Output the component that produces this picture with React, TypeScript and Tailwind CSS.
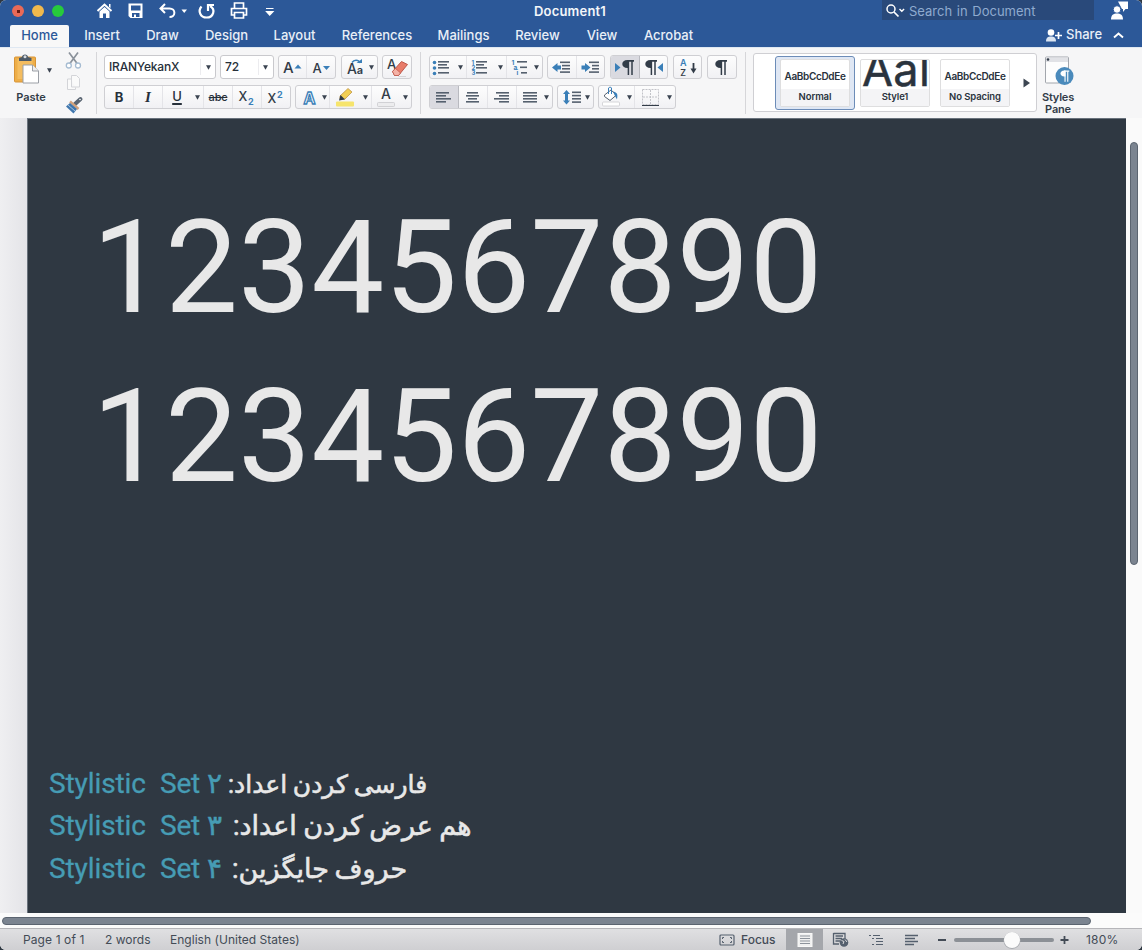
import React from "react";

type SvgProps = { w: number; h?: number; children: React.ReactNode };

function Ico({ w, h = 23, children }: SvgProps) {
  return (
    <svg width={w} height={h} viewBox={`0 0 ${w} ${h}`} fill="none" className="block shrink-0">
      {children}
    </svg>
  );
}

function Arrow({ color = "#3a4350" }: { color?: string }) {
  return (
    <svg width="5" height="5" viewBox="0 0 5 5" className="block shrink-0">
      <path d="M0 .3H5L2.500 4.800Z" fill={color} />
    </svg>
  );
}

function Group({ className, children }: { className: string; children: React.ReactNode }) {
  return (
    <div
      className={`flex h-6 shrink-0 items-stretch overflow-hidden rounded-[3px] border border-[#cfcfd3] bg-gradient-to-b from-[#fdfdfd] to-[#f1f1f4] ${className}`}
    >
      {children}
    </div>
  );
}

function Cell({ className, children }: { className: string; children: React.ReactNode }) {
  return <div className={`flex shrink-0 items-center justify-center ${className}`}>{children}</div>;
}

const ink = "#323c48";
const blue = "#3a7fb8";
const line = "#55606e";

function Lines({ rows }: { rows: [number, number, number][] }) {
  return (
    <>
      {rows.map(([x, y, len]) => (
        <rect key={`${x}-${y}`} x={x} y={y} width={len} height="1.6" fill={line} />
      ))}
    </>
  );
}

function Pilcrow({ x, color = ink }: { x: number; color?: string }) {
  return (
    <g transform={`translate(${x} 4)`}>
      <path d="M5 0H12V1.700H5Z" fill={color} />
      <path d="M5.500 0C-1.500 0 -1.500 8 5.500 8H7V0Z" fill={color} />
      <path d="M6.400 1V15M10 1V15" stroke={color} strokeWidth="1.500" />
    </g>
  );
}

const svgFont = { fontFamily: "Inter, sans-serif" };

function TitleBar() {
  return (
    <div className="flex h-[25px] items-start">
      <div className="flex h-[22px] w-[533px] items-center">
        <div className="ml-3 flex gap-2">
          <div className="flex h-3 w-3 items-center justify-center rounded-full bg-[#e96a57]">
            <div className="h-[3px] w-[3px] bg-[#6b1b12]" />
          </div>
          <div className="h-3 w-3 rounded-full bg-[#f0b94d]" />
          <div className="h-3 w-3 rounded-full bg-[#27cb3c]" />
        </div>
        <div className="ml-[30px] flex">
          <Ico w={200} h={22}>
            <g transform="translate(-94 0)">
              <path d="M97.500 11L104.500 4.500L111.500 11" stroke="#fff" strokeWidth="2" />
              <path d="M99.500 11.500L104.500 7L109.500 11.500V18H106V13.500H103V18H99.500Z" fill="#fff" />
              <path d="M109 4H110.500V8L109 7Z" fill="#fff" />
              <path d="M128.500 3.500H142.500V18H130.500L128.500 16Z" fill="#fff" />
              <path d="M131 5.500H140.500V10.500H131ZM132 13H139.500V17H136V14.500H134V17H132Z" fill="#2c5898" />
              <path d="M165 4L160.500 8.500L165 13M161 8.500H169.500C176 8.500 176 17 169.500 17" stroke="#fff" strokeWidth="2" />
              <path d="M181.500 9.500H187L184.200 13Z" fill="#fff" />
              <path d="M201.500 6.500C197.500 11 200.500 17.500 206.500 17.500C213.500 17.500 216 9.500 210 6M208 11V5H214" stroke="#fff" strokeWidth="2.200" />
              <path d="M234.500 8V3H243.500V8M234 15H231.500V8.500H246.500V15H244M234.500 12.500H243.500V18H234.500Z" stroke="#fff" strokeWidth="1.700" />
              <path d="M266 8.500H273.500M266.500 11.500H273L269.700 15Z" stroke="#fff" strokeWidth="1.200" fill="#fff" />
            </g>
          </Ico>
        </div>
      </div>
      <div className="flex h-[23px] w-[74px] items-center justify-center whitespace-nowrap text-[13px] font-semibold tracking-[0.200px] text-[#f3f6fa]">
        Document1
      </div>
      <div className="ml-[275px] flex h-5 w-[212px] items-center bg-[#29497a]">
        <Ico w={24} h={20}>
          <circle cx="9" cy="9" r="4" stroke="#fff" strokeWidth="1.500" />
          <path d="M12 12L16.500 16.500" stroke="#fff" strokeWidth="1.700" />
          <path d="M17.500 9L19.800 11.300L22.100 9" stroke="#fff" strokeWidth="1.400" />
        </Ico>
        <span className="ml-[3px] mt-px whitespace-nowrap text-[13px] leading-4 tracking-[-0.450px] text-[#8fabcf] [word-spacing:1px]">
          <span className="tracking-normal">Search in Document</span>
        </span>
      </div>
      <div className="ml-[16px]">
        <Ico w={20} h={22}>
          <path d="M8 1.500H18V9H15.500L13 12V9H12Z" fill="#fff" />
          <circle cx="7" cy="9.500" r="3.800" fill="#fff" stroke="#2c5898" />
          <path d="M1 19.500C1 15 3.500 13.500 7 13.500S13 15 13 19.500Z" fill="#fff" />
        </Ico>
      </div>
    </div>
  );
}

function Tabs() {
  const tab = "flex h-[22px] shrink-0 items-center justify-center text-[13px] font-medium";
  return (
    <div className="flex h-[22px] items-center pl-[10px] text-[#e9eff7]">
      <div className={`${tab} w-[59px] rounded-t-[2px] bg-[#f8f8f8] text-[#2c5898]`}>Home</div>
      <div className={`${tab} w-[66px]`}>Insert</div>
      <div className={`${tab} w-[55px]`}>Draw</div>
      <div className={`${tab} w-[73px]`}>Design</div>
      <div className={`${tab} w-[63px]`}>Layout</div>
      <div className={`${tab} w-[102px]`}>References</div>
      <div className={`${tab} w-[71px]`}>Mailings</div>
      <div className={`${tab} w-[77px]`}>Review</div>
      <div className={`${tab} w-[52px]`}>View</div>
      <div className={`${tab} w-[81px]`}>Acrobat</div>
      <div className="ml-auto flex items-center pr-[18px]">
        <Ico w={18} h={16}>
          <circle cx="6" cy="4.500" r="3.300" fill="#fff" />
          <path d="M1 13.500C1 9.500 3 8.500 6 8.500S11 9.500 11 13.500Z" fill="#dbe5f1" />
          <path d="M10 7.500H17M13.500 4V11" stroke="#fff" strokeWidth="1.700" />
        </Ico>
        <span className="mt-[-3px] ml-[3px] w-[36px] text-[13px] font-medium">Share</span>
        <span className="ml-[11px]">
          <Ico w={11} h={10}>
            <path d="M1 6.500L5.500 2.500L10 6.500" stroke="#fff" strokeWidth="1.900" />
          </Ico>
        </span>
      </div>
    </div>
  );
}

function Clipboard() {
  return (
    <div className="flex w-[96px] shrink-0">
      <div className="flex w-[60px] flex-col">
        <div className="flex h-[37px]">
          <span className="ml-3 mt-[5px]">
            <Ico w={30} h={32}>
              <rect x="2.500" y="4" width="21" height="25" rx="1" fill="#eeae48" stroke="#d89436" />
              <rect x="5.500" y="6" width="15" height="20" fill="#f4bd60" />
              <path d="M7 8V5L10 4C10 .5 16 .5 16 4L19.500 5V8Z" fill="#4d5a68" />
              <circle cx="13" cy="3.800" r="1.500" fill="#d6dbe0" />
              <path d="M11 12H20.500L26.500 18V30H11Z" fill="#fff" stroke="#9b9fa6" />
              <path d="M20.500 12V18H26.500" fill="#eee" stroke="#9b9fa6" />
            </Ico>
          </span>
          <span className="ml-[5px] mt-[20px]"><Arrow /></span>
        </div>
        <span className="mt-[4px] w-[62px] text-center text-[11px] font-semibold leading-4 text-[#323c48]">Paste</span>
      </div>
      <div className="flex flex-col">
        <Ico w={28} h={70}>
          <g transform="translate(0 -1)">
            <path d="M9 5.500L17.500 17M18 5.500L9.500 17" stroke="#8b929b" strokeWidth="1.700" />
            <circle cx="8.800" cy="18.500" r="2.500" fill="#fff" stroke="#a6bcd2" strokeWidth="1.300" />
            <circle cx="18" cy="18.500" r="2.500" fill="#fff" stroke="#a6bcd2" strokeWidth="1.300" />
            <path d="M11.500 28.500H16.500L19.500 31.500V40H11.500ZM11 32H7.500V42.500H15.500V40.500" stroke="#d3d4d8" fill="#fafafa" />
            <path d="M14.500 57.500L20.500 52" stroke="#5a6572" strokeWidth="4" strokeLinecap="round" />
            <path d="M10 54.500L18.500 62" stroke="#d3a27c" strokeWidth="2.500" />
            <path d="M6 59.500L10 56L17 62L13.500 66.500Z" fill="#3f76ad" />
            <path d="M8 58L15 64" stroke="#a9c4df" />
            <circle cx="20" cy="52.500" r=".8" fill="#fff" />
          </g>
        </Ico>
      </div>
    </div>
  );
}

function RowOne() {
  return (
    <div className="flex h-6">
      <div className="flex h-6 w-[112px] items-center rounded-[3px] border border-[#c9c9cd] bg-white">
        <span className="w-[95px] pl-[4px] text-[12px] font-medium tracking-[-0.200px] text-[#27303a]">IRANYekanX</span>
        <span className="mr-[5px] h-4 w-px bg-[#ececef]" />
        <Arrow />
      </div>
      <div className="ml-1 flex h-6 w-[54px] items-center rounded-[3px] border border-[#c9c9cd] bg-white">
        <span className="w-[37px] pl-[4px] text-[12px] font-medium text-[#27303a]">72</span>
        <span className="mr-[4px] h-4 w-px bg-[#ececef]" />
        <Arrow />
      </div>
      <Group className="ml-1 w-[58px]">
        <Cell className="w-7 border-r border-[#e4e4e8]">
          <Ico w={28}>
            <text x="4" y="16.500" fontSize="15" fontWeight="500" fill={ink} style={svgFont}>A</text>
            <path d="M15.500 12.500H22.500L19 8.500Z" fill={blue} />
          </Ico>
        </Cell>
        <Cell className="w-7">
          <Ico w={28}>
            <text x="5.500" y="16.500" fontSize="13" fontWeight="500" fill={ink} style={svgFont}>A</text>
            <path d="M16 10H23L19.500 14Z" fill={blue} />
          </Ico>
        </Cell>
      </Group>
      <Group className="ml-[5px] w-[37px]">
        <Cell className="w-[26px]">
          <Ico w={26}>
            <text x="5" y="18" fontSize="14" fontWeight="500" fill={ink} style={svgFont}>A</text>
            <text x="14.800" y="18" fontSize="11" fontWeight="600" fill={ink} style={svgFont}>a</text>
            <path d="M10 6.500C12 3.500 16.500 3.500 18 7" stroke={blue} strokeWidth="1.500" />
            <path d="M14.500 7H20V3Z" fill={blue} />
          </Ico>
        </Cell>
        <Cell className="w-[7px]"><Arrow /></Cell>
      </Group>
      <Group className="ml-1 w-[30px]">
        <Cell className="w-7">
          <Ico w={28}>
            <text x="4" y="13" fontSize="13" fontWeight="500" fill={ink} style={svgFont}>A</text>
            <path d="M9.500 15.500L18.500 5.500L24.500 8.500L15.500 19.500H11.500Z" fill="#e87c6a" stroke="#b74f42" strokeWidth=".9" />
            <path d="M9.500 15.500L12.500 12.500L17.500 17L15.500 19.500H11.500Z" fill="#f4b1a5" stroke="#b74f42" strokeWidth=".6" />
            <path d="M15.500 20.500H23" stroke="#d5d5d8" />
          </Ico>
        </Cell>
      </Group>
      <Group className="ml-[17px] w-[114px]">
        <Cell className="w-[25px]">
          <Ico w={25}>
            <circle cx="4.500" cy="6.500" r="1.800" fill={blue} />
            <circle cx="4.500" cy="12" r="1.800" fill={blue} />
            <circle cx="4.500" cy="17.500" r="1.800" fill={blue} />
            <Lines rows={[[8, 5, 11], [8, 8, 9], [8, 11, 11], [8, 16, 11]]} />
          </Ico>
        </Cell>
        <Cell className="w-[11px]"><Arrow /></Cell>
        <Cell className="w-[28px] border-l border-[#e4e4e8]">
          <Ico w={27}>
            <g fill={blue} fontSize="6" fontWeight="700" style={svgFont}>
              <text x="4.500" y="8.500">1</text><text x="4.500" y="13.500">2</text><text x="4.500" y="18.500">3</text>
            </g>
            <Lines rows={[[9, 5, 11], [9, 8, 8], [9, 11, 11], [9, 16, 11]]} />
          </Ico>
        </Cell>
        <Cell className="w-[12px]"><Arrow /></Cell>
        <Cell className="w-[26px] border-l border-[#e4e4e8]">
          <Ico w={25}>
            <g fill={blue} fontSize="6.500" fontWeight="700" style={svgFont}>
              <text x="4.500" y="8.500">1</text><text x="6.500" y="14">a</text><text x="9.500" y="19">i</text>
            </g>
            <Lines rows={[[10, 5, 10], [13, 10.500, 7], [14, 16, 6]]} />
          </Ico>
        </Cell>
        <Cell className="w-[8px]"><Arrow /></Cell>
      </Group>
      <Group className="ml-1 w-[58px]">
        <Cell className="w-[29px] border-r border-[#e4e4e8]">
          <Ico w={28}>
            <path d="M4 11.500L9.500 7V9.500H13V13.500H9.500V16Z" fill={blue} />
            <Lines rows={[[12, 5.500, 10], [14, 8.800, 8], [14, 12, 8], [12, 15.300, 10]]} />
          </Ico>
        </Cell>
        <Cell className="w-[27px]">
          <Ico w={27}>
            <path d="M13.500 11.500L8 7V9.500H4.500V13.500H8V16Z" fill={blue} />
            <Lines rows={[[12, 5.500, 10], [15, 8.800, 7], [15, 12, 7], [12, 15.300, 10]]} />
          </Ico>
        </Cell>
      </Group>
      <Group className="ml-[5px] w-[58px]">
        <Cell className="w-[29px] border-r border-[#b9bac0] bg-[#dadae0]">
          <Ico w={28}>
            <path d="M4 7L9.500 11.500L4 16Z" fill={blue} />
            <Pilcrow x={11} />
          </Ico>
        </Cell>
        <Cell className="w-[27px]">
          <Ico w={27}>
            <Pilcrow x={5} />
            <path d="M23 7L17.500 11.500L23 16Z" fill={blue} />
          </Ico>
        </Cell>
      </Group>
      <Group className="ml-[5px] w-[29px]">
        <Cell className="w-[27px]">
          <Ico w={27}>
            <text x="6" y="9.500" fontSize="9" fontWeight="600" fill={blue} style={svgFont}>A</text>
            <text x="6.300" y="19.500" fontSize="9" fontWeight="500" fill={ink} style={svgFont}>Z</text>
            <path d="M19.500 7V15" stroke={ink} strokeWidth="1.800" />
            <path d="M16.500 12.500H22.500L19.500 17.500Z" fill={ink} />
          </Ico>
        </Cell>
      </Group>
      <Group className="ml-[5px] w-[30px]">
        <Cell className="w-[28px]">
          <Ico w={28}>
            <Pilcrow x={7} />
          </Ico>
        </Cell>
      </Group>
    </div>
  );
}

function RowTwo() {
  return (
    <div className="mt-[6px] flex h-6">
      <Group className="w-[187px] text-[#27303a]">
        <Cell className="w-[29px] border-r border-[#e4e4e8] pt-px text-[13px] font-bold">B</Cell>
        <Cell className="w-[29px] border-r border-[#e4e4e8] text-[15px] font-bold italic"><span className="font-['Liberation_Serif',serif]">I</span></Cell>
        <Cell className="w-[28px] text-[13px] font-medium"><span className="underline decoration-[1.5px] underline-offset-2">U</span></Cell>
        <Cell className="w-[12px]"><Arrow /></Cell>
        <Cell className="w-[30px] border-x border-[#e4e4e8] text-[11px] font-medium tracking-[-0.200px] line-through">abc</Cell>
        <Cell className="w-[29px] border-r border-[#e4e4e8]">
          <Ico w={28}>
            <text x="5.500" y="15" fontSize="12.500" fontWeight="500" fill={ink} style={svgFont}>X</text>
            <text x="15" y="18.500" fontSize="9" fontWeight="700" fill={blue} style={svgFont}>2</text>
          </Ico>
        </Cell>
        <Cell className="w-[28px]">
          <Ico w={28}>
            <text x="5.500" y="17" fontSize="12.500" fontWeight="500" fill={ink} style={svgFont}>X</text>
            <text x="15" y="11.500" fontSize="9" fontWeight="700" fill={blue} style={svgFont}>2</text>
          </Ico>
        </Cell>
      </Group>
      <Group className="ml-[4px] w-[117px]">
        <Cell className="w-[24px]">
          <Ico w={24}>
            <text x="7.500" y="17.500" fontSize="16" fontWeight="700" fill="#fff" stroke="#3a7fb8" strokeWidth="1.300" style={svgFont}>A</text>
          </Ico>
        </Cell>
        <Cell className="w-[9px]"><Arrow /></Cell>
        <Cell className="w-[30px] border-l border-[#e4e4e8]">
          <Ico w={28}>
            <path d="M9 10L17 2.500L21 6L14 13H9Z" fill="#f2cf55" stroke="#b98d3d" strokeWidth=".7" />
            <path d="M8 14.500L9.500 9L14 13.500Z" fill={ink} />
            <rect x="5" y="15.500" width="18" height="5" rx="1" fill="#f6e46c" />
          </Ico>
        </Cell>
        <Cell className="w-[12px]"><Arrow /></Cell>
        <Cell className="w-[29px] border-l border-[#e4e4e8]">
          <Ico w={28}>
            <text x="9" y="13" fontSize="14" fontWeight="500" fill={ink} style={svgFont}>A</text>
            <rect x="5.500" y="16.500" width="17" height="4" rx="1" fill="#ececee" stroke="#c9c9cd" strokeWidth=".8" />
          </Ico>
        </Cell>
        <Cell className="w-[10px]"><Arrow /></Cell>
      </Group>
      <Group className="ml-[17px] w-[124px]">
        <Cell className="w-[29px] border-r border-[#b9bac0] bg-[#dadae0]">
          <Ico w={28}><Lines rows={[[6, 6, 13], [6, 9, 10], [6, 12, 15], [6, 15, 10]]} /></Ico>
        </Cell>
        <Cell className="w-[29px] border-r border-[#e4e4e8]">
          <Ico w={28}><Lines rows={[[8, 6, 11], [7, 9, 13], [9, 12, 9], [7, 15, 13]]} /></Ico>
        </Cell>
        <Cell className="w-[29px] border-r border-[#e4e4e8]">
          <Ico w={28}><Lines rows={[[8, 6, 13], [11, 9, 10], [6, 12, 15], [11, 15, 10]]} /></Ico>
        </Cell>
        <Cell className="w-[26px]">
          <Ico w={26}><Lines rows={[[6, 6, 14], [6, 9, 14], [6, 12, 14], [6, 15, 14]]} /></Ico>
        </Cell>
        <Cell className="w-[6px]"><Arrow /></Cell>
      </Group>
      <Group className="ml-1 w-[37px]">
        <Cell className="w-[26px]">
          <Ico w={26}>
            <path d="M8.500 4L12 8H10V14.500H12L8.500 18.500L5 14.500H7V8H5Z" fill={blue} />
            <Lines rows={[[14, 5.500, 9], [14, 8.800, 9], [14, 12, 9], [14, 15.300, 9]]} />
          </Ico>
        </Cell>
        <Cell className="w-[6px]"><Arrow /></Cell>
      </Group>
      <Group className="ml-1 w-[78px]">
        <Cell className="w-[25px]">
          <Ico w={25}>
            <path d="M5.500 9L12 4L17.500 9L11 14.500L5.500 10.500Z" fill="#fff" stroke="#55606e" />
            <path d="M9.500 8V2C10 1 12.500 1 12.500 2V8" stroke="#3a7fb8" />
            <path d="M14 5.500C19.500 6.500 18.500 10 18 13.500L15.500 9Z" fill={blue} />
            <rect x="3.500" y="16" width="17" height="4" rx="1" fill="#fff" stroke="#cdcdd1" strokeWidth=".8" />
          </Ico>
        </Cell>
        <Cell className="w-[10px]"><Arrow /></Cell>
        <Cell className="w-[30px] border-l border-[#e4e4e8]">
          <Ico w={28}>
            <rect x="6.500" y="3.500" width="16" height="15" stroke="#c2c3c8" strokeDasharray="2 1" />
            <path d="M14.500 4V18M7 11H22" stroke="#c2c3c8" strokeDasharray="2 1" />
            <path d="M6 19.500H23" stroke={ink} strokeWidth="1.200" />
          </Ico>
        </Cell>
        <Cell className="w-[11px]"><Arrow /></Cell>
      </Group>
    </div>
  );
}

function StyleCard({ name, big }: { name: string; big?: boolean }) {
  return (
    <div className="flex h-[48px] w-[70px] shrink-0 flex-col overflow-hidden rounded-[2px] border border-[#dededf] bg-white text-[#2a333d]">
      <div className="flex h-[29px] items-center justify-center overflow-hidden whitespace-nowrap">
        {big ? (
          <span className="mt-[-9px] w-[70px] pl-[2px] text-[45px] leading-[30px] tracking-[0.300px] [-webkit-text-stroke:0.5px_#2a333d]">Aal</span>
        ) : (
          <span className="mt-[4px] text-[10px] font-semibold tracking-[-0.350px]">AaBbCcDdEe</span>
        )}
      </div>
      <div className="flex flex-1 items-center justify-center bg-[#f4f4f6] pt-px text-[9.500px] font-semibold tracking-[-0.100px]">{name}</div>
    </div>
  );
}

function Ribbon() {
  return (
    <div className="flex h-[71px] border-t border-[#dfe8f2] bg-[#f6f6f7]">
      <Clipboard />
      <div className="mt-1 h-[62px] w-px shrink-0 bg-[#d6d6d9]" />
      <div className="relative w-[648px] shrink-0 pl-[7px] pt-[7px]">
        <RowOne />
        <RowTwo />
        <div className="absolute left-[323px] top-1 h-[62px] w-px bg-[#d6d6d9]" />
      </div>
      <div className="mt-1 h-[62px] w-px shrink-0 bg-[#d6d6d9]" />
      <div className="ml-[7px] mt-[5px] flex h-[59px] w-[284px] shrink-0 items-center rounded-[3px] border border-[#cfcfd3] bg-white pl-[21px]">
        <div className="flex h-[54px] w-[80px] shrink-0 items-center justify-center rounded-[3px] border border-[#6c8cb8] bg-[#dfe7f4]">
          <StyleCard name="Normal" />
        </div>
        <div className="ml-[5px]"><StyleCard name="Style1" big /></div>
        <div className="ml-[10px]"><StyleCard name="No Spacing" /></div>
        <span className="ml-[13px]">
          <Ico w={8} h={10}><path d="M.5 .5L7 5L.5 9.500Z" fill="#3c4652" /></Ico>
        </span>
      </div>
      <div className="flex w-[42px] flex-col items-center pt-[6px]">
        <Ico w={32} h={33}>
          <rect x="3.500" y="3" width="23" height="26" rx="1" fill="#fdfdfd" stroke="#a2a6ac" />
          <path d="M4 3.500H26V8H4Z" fill="#e1e2e6" />
          <circle cx="6" cy="5.500" r="1.300" fill={ink} />
          <circle cx="22.500" cy="22" r="9" fill="#4a8abb" />
          <g transform="translate(17.500 13.500) scale(.75)">
            <Pilcrow x={1} color="#fff" />
          </g>
        </Ico>
        <div className="mt-[4px] text-center text-[11px] font-semibold leading-[12px] tracking-[-0.200px] text-[#323c48]">
          Styles
          <br />
          Pane
        </div>
      </div>
    </div>
  );
}

type SetLineProps = { digit: string; fit: string; gap: string; height: string; children: React.ReactNode };

function SetLine({ digit, fit, gap, height, children }: SetLineProps) {
  return (
    <div
      className={`flex items-baseline whitespace-nowrap font-['Roboto','DejaVu_Sans',sans-serif] text-[28px] leading-[42px] ${height}`}
    >
      <span className="w-[111px] tracking-[-0.100px] text-[#469cb4] [-webkit-text-stroke:0.3px_#469cb4]">Stylistic</span>
      <span className="w-[47px] tracking-[-0.200px] text-[#469cb4] [-webkit-text-stroke:0.3px_#469cb4]">Set</span>
      <span className={`${gap} text-[28px] text-[#469cb4] [-webkit-text-stroke:0.5px_#469cb4]`}>{digit}</span>
      <span dir="rtl" className={`text-[#e8e8e8] [-webkit-text-stroke:0.6px_#e8e8e8] ${fit}`}>
        {children}
      </span>
    </div>
  );
}

function StatusBar() {
  return (
    <div className="flex h-[22px] items-center overflow-hidden border-t border-[#b5b5b9] bg-gradient-to-b from-[#e0e0e2] to-[#cfcfd2] text-[12px] text-[#434b56]">
      <span className="ml-[23px] w-[82px] whitespace-nowrap tracking-[0.100px]">Page 1 of 1</span>
      <span className="w-[65px] whitespace-nowrap">2 words</span>
      <span className="whitespace-nowrap tracking-[0.030px]">English (United States)</span>
      <span className="ml-auto flex w-[423px] items-center">
        <Ico w={16} h={12}>
          <rect x="1" y="1" width="14" height="10" rx="1" stroke="#55606e" strokeWidth="1.200" />
          <path d="M3.500 5V3.500H5M11 3.500H12.500V5M12.500 7V8.500H11M5 8.500H3.500V7" stroke="#55606e" />
        </Ico>
        <span className="ml-[6px] w-[45px] font-medium">Focus</span>
        <span className="flex h-[22px] w-[37px] items-center justify-center bg-[#a4a6ab]">
          <Ico w={16} h={14}>
            <rect x="1" y=".5" width="14" height="13" fill="#f0f0f0" stroke="#f8f8f8" />
            <path d="M3 3H13M3 5.500H13M3 8H13M3 10.500H13" stroke="#8d939b" />
          </Ico>
        </span>
        <span className="ml-[9px]">
          <Ico w={18} h={16}>
            <path d="M1.500 1.500H13V7M1.500 1V12H7M3.500 4H11M3.500 6.500H10M3.500 9H8" stroke="#55606e" strokeWidth="1.300" />
            <circle cx="12" cy="10.500" r="4.300" fill="#55606e" />
            <path d="M9.500 8.500L12 9.500L11 12M13 7.500L15 10" stroke="#dadadc" />
          </Ico>
        </span>
        <span className="ml-[18px]">
          <Ico w={17} h={14}>
            <path d="M1 2.500H3M5 2.500H12M4 5.500H6M8 5.500H15M8 8.500H15M4 11.500H6M8 11.500H15" stroke="#55606e" strokeWidth="1.200" />
          </Ico>
        </span>
        <span className="ml-[19px]">
          <Ico w={16} h={14}>
            <path d="M1 2.500H14M1 5.500H11M1 8.500H14M1 11.500H10" stroke="#55606e" strokeWidth="1.300" />
          </Ico>
        </span>
        <span className="ml-[17px]">
          <Ico w={132} h={20}>
            <path d="M1 10H9" stroke="#434b56" strokeWidth="2" />
            <rect x="17" y="8" width="100" height="4" rx="2" fill="#8c9096" />
            <circle cx="75" cy="10.500" r="8.500" fill="#a9abb0" />
            <circle cx="75" cy="10" r="8" fill="#fbfbfb" />
            <path d="M123.500 10H131.500M127.500 6V14" stroke="#434b56" strokeWidth="1.800" />
          </Ico>
        </span>
        <span className="ml-[17px] tracking-[0.200px]">180%</span>
      </span>
    </div>
  );
}

export default function App() {
  return (
    <div className="h-[950px] w-[1142px] overflow-hidden bg-[#2f3842] font-['Inter','Liberation_Sans',sans-serif]">
      <div className="flex h-[950px] flex-col overflow-hidden rounded-[6px] bg-[#fbfbfb]">
        <div className="shrink-0 bg-[#2c5898]">
          <TitleBar />
          <Tabs />
        </div>
        <Ribbon />
        <div className="flex h-[795px] shrink-0">
          <div className="w-[27px] bg-gradient-to-r from-[#efeff1] to-[#e4e4e8]" />
          <div className="flex w-[1099px] flex-col border-l border-t border-[#69727c] bg-[#2f3842]">
            <div className="h-[608px] pl-[64px] pt-[64px] font-['Roboto',sans-serif] text-[130px] leading-[169px] text-[#e8e8e8]">
              <div>1234567890</div>
              <div>1234567890</div>
            </div>
            <div className="pl-[21px] pt-[36px]">
              <SetLine digit="۲" gap="w-[21px]" height="h-[42px]" fit="text-[25px] [word-spacing:-0.5px]">فارسی کردن اعداد:</SetLine>
              <SetLine digit="۳" gap="w-[26px]" height="h-[43px]" fit="text-[27px] [word-spacing:-0.3px]">هم عرض کردن اعداد:</SetLine>
              <SetLine digit="۴" gap="w-[25px]" height="h-[42px]" fit="text-[27px] [word-spacing:-1px]">حروف جایگزین:</SetLine>
            </div>
          </div>
          <div className="flex w-4 justify-center bg-[#fafafa] pt-6">
            <div className="h-[423px] w-[8px] rounded-full border border-[#5b6470] bg-[#7b8490]" />
          </div>
        </div>
        <div className="flex h-[15px] shrink-0 items-center bg-[#fbfbfb]">
          <div className="ml-[2px] h-2 w-[1089px] rounded-full border border-[#5b6470] bg-[#7b8490]" />
        </div>
        <StatusBar />
      </div>
    </div>
  );
}
